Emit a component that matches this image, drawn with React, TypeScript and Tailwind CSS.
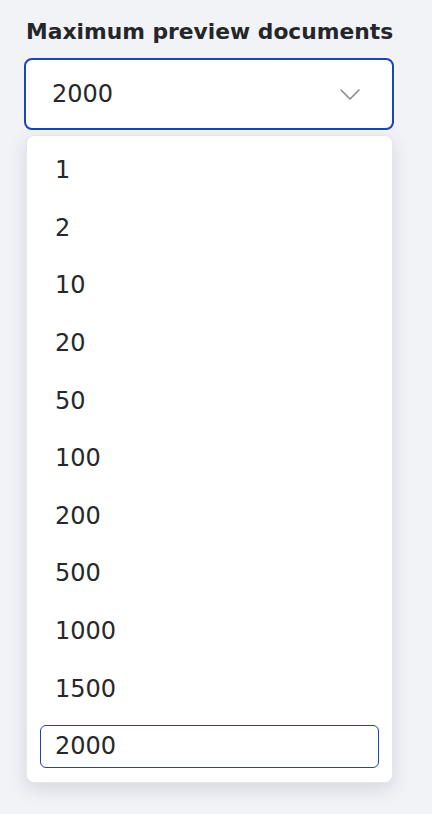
import { useState } from 'react';

const options = [1, 2, 10, 20, 50, 100, 200, 500, 1000, 1500, 2000];

function Chevron() {
  return (
    <svg width="20" height="11" viewBox="0 0 20 11" fill="none" className="shrink-0">
      <path d="M1 1l9 9 9-9" stroke="#8a8b8f" strokeWidth="1.6" strokeLinecap="round" strokeLinejoin="round" />
    </svg>
  );
}

export default function App() {
  const [value, setValue] = useState(2000);

  return (
    <div className="min-h-screen w-full bg-[#f2f3f7] font-['DejaVu_Sans',sans-serif] text-[#27282c]">
      <div className="px-[24px] pt-[18px]">
        {/* Label */}
        <div className="h-[28px] text-[21.8px] leading-[28px] font-bold text-[#25262a] pl-[2px]">
          Maximum preview documents
        </div>

        {/* Select trigger */}
        <button
          type="button"
          className="mt-[12px] flex h-[72px] w-[370px] items-center justify-between rounded-[8px] border-2 border-[#1c44b4] bg-white pl-[26px] pr-[32px] text-left"
        >
          <span className="text-[24px] leading-[30px]">{value}</span>
          <Chevron />
        </button>

        {/* Listbox */}
        <ul className="mt-[5px] ml-[2px] w-[367px] rounded-[8px] border border-[#e2e7f2] bg-white px-[13px] pt-[6px] pb-[6px] shadow-[0_6px_18px_rgba(60,70,100,0.16)]">
          {options.map((opt) => {
            const selected = opt === value;
            return (
              <li key={opt} className="flex h-[57.6px] items-center" onClick={() => setValue(opt)}>
                <div
                  className={
                    selected
                      ? 'flex h-[43px] w-full items-center rounded-[6px] border border-[#1c44b4] pl-[14px] text-[24px] leading-[43px]'
                      : 'flex h-[43px] w-full items-center rounded-[6px] border border-transparent pl-[14px] text-[24px] leading-[43px]'
                  }
                >
                  {opt}
                </div>
              </li>
            );
          })}
        </ul>
      </div>
    </div>
  );
}
